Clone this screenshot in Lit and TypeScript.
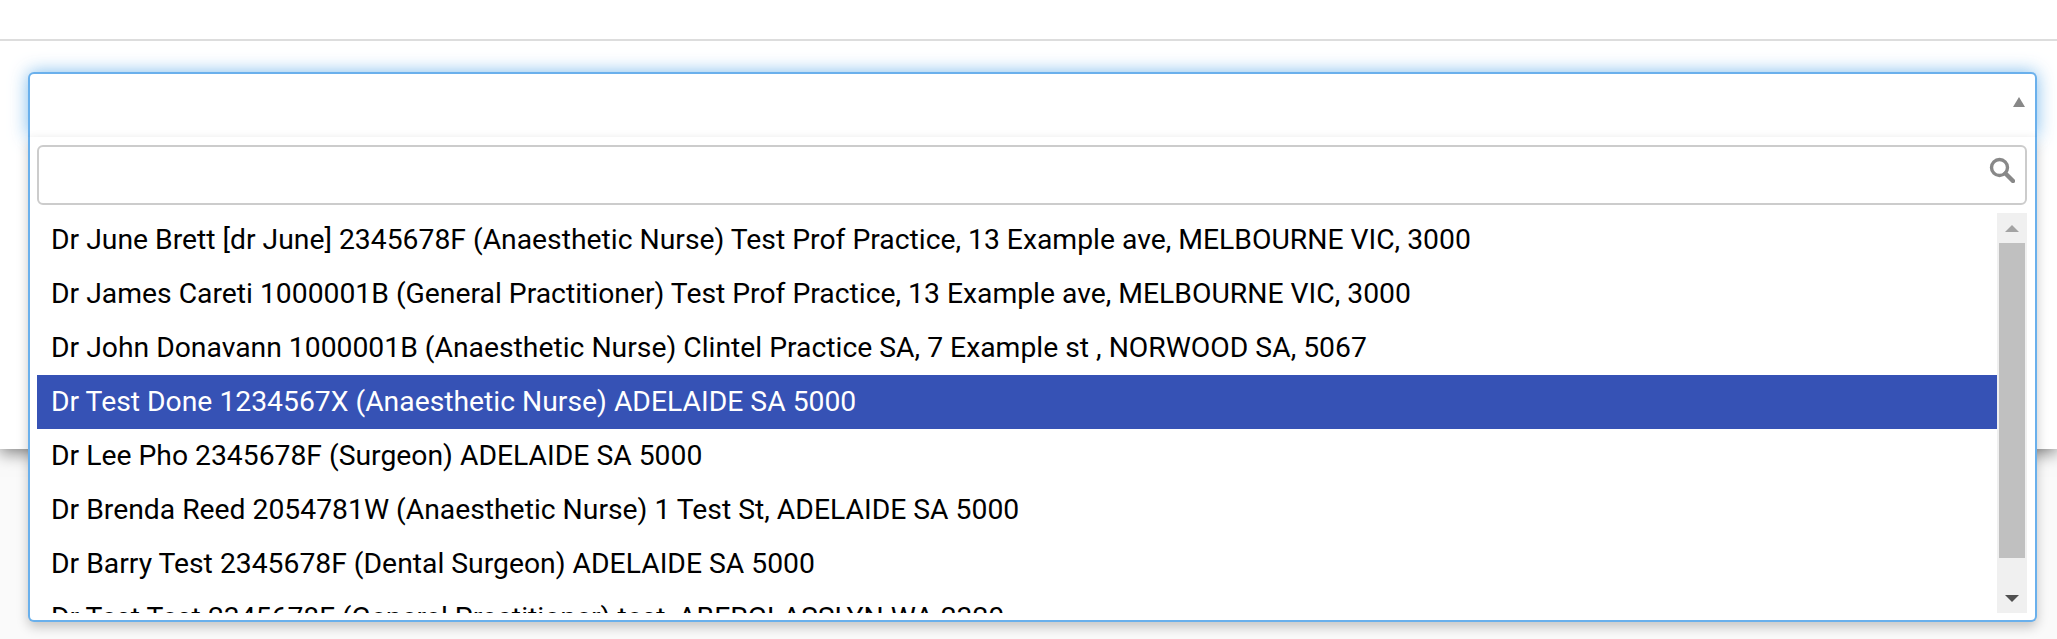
import { LitElement, css, html } from 'lit';
import { customElement } from 'lit/decorators.js';

const DOCTORS = [
  'Dr June Brett [dr June] 2345678F (Anaesthetic Nurse) Test Prof Practice, 13 Example ave, MELBOURNE VIC, 3000',
  'Dr James Careti 1000001B (General Practitioner) Test Prof Practice, 13 Example ave, MELBOURNE VIC, 3000',
  'Dr John Donavann 1000001B (Anaesthetic Nurse) Clintel Practice SA, 7 Example st , NORWOOD SA, 5067',
  'Dr Test Done 1234567X (Anaesthetic Nurse) ADELAIDE SA 5000',
  'Dr Lee Pho 2345678F (Surgeon) ADELAIDE SA 5000',
  'Dr Brenda Reed 2054781W (Anaesthetic Nurse) 1 Test St, ADELAIDE SA 5000',
  'Dr Barry Test 2345678F (Dental Surgeon) ADELAIDE SA 5000',
  'Dr Test Test 2345678F (General Practitioner) test, ABERGLASSLYN WA 2320',
];
const SELECTED = 3;

@customElement('app-root')
export class AppRoot extends LitElement {
  static styles = css`
    :host {
      display: block;
      position: relative;
      height: 639px;
      overflow: hidden;
      background: #fafafa;
      font-family: Roboto, sans-serif;
      color: #000;
    }
    .panel {
      height: 449px;
      box-sizing: border-box;
      padding-top: 39px;
      background: #fff;
      box-shadow: 0 4px 16px rgba(0, 0, 0, 0.5);
    }
    .rule {
      height: 2px;
      background: #ddd;
    }
    .select {
      position: absolute;
      left: 28px;
      right: 20px;
      top: 72px;
    }
    .single {
      height: 65px;
      box-sizing: border-box;
      display: flex;
      justify-content: flex-end;
      padding: 23px 10px 0 0;
      background: #fff;
      border: 2px solid #6ab0ec;
      border-bottom: 0;
      border-radius: 6px 6px 0 0;
      box-shadow: 0 0 18px rgba(102, 175, 233, 0.85);
    }
    .drop {
      position: relative;
      height: 485px;
      box-sizing: border-box;
      padding: 8px 8px 9px 7px;
      background: #fff;
      border: 2px solid #6ab0ec;
      border-top: 0;
      border-radius: 0 0 6px 6px;
      box-shadow: 0 5px 12px rgba(0, 0, 0, 0.22);
    }
    .search {
      display: flex;
      justify-content: flex-end;
      height: 60px;
      box-sizing: border-box;
      padding: 10px 10px 0 0;
      border: 2px solid #ccc;
      border-radius: 6px;
    }
    .results {
      display: flex;
      height: 400px;
      margin-top: 8px;
    }
    .list {
      flex: 1;
      min-width: 0;
      overflow: hidden;
    }
    .row {
      height: 54px;
      box-sizing: border-box;
      padding-left: 14px;
      font-size: 28.3px;
      line-height: 53px;
      white-space: nowrap;
    }
    .row.on {
      background: #3652b5;
      color: #fff;
    }
    .bar {
      width: 30px;
      display: flex;
      flex-direction: column;
      align-items: center;
      background: #f0f0f0;
    }
    .btn {
      width: 100%;
      height: 30px;
      display: flex;
      align-items: center;
      justify-content: center;
    }
    .thumb {
      width: 26px;
      height: 315px;
      background: #c0c0c0;
    }
    .track {
      flex: 1;
    }
    svg {
      display: block;
    }
  `;

  render() {
    return html`
      <div class="panel"><div class="rule"></div></div>
      <div class="select">
        <div class="single">
          <svg width="12" height="10" viewBox="0 0 12 10"><path d="M6 0 12 10H0z" fill="#888" /></svg>
        </div>
        <div class="drop">
          <div class="search">
            <svg width="26" height="26" viewBox="0 0 26 26" fill="none" stroke="#888">
              <circle cx="10.5" cy="10.5" r="8" stroke-width="3.4" />
              <path d="M16.5 16.5 24 24" stroke-width="4.4" stroke-linecap="round" />
            </svg>
          </div>
          <div class="results">
            <div class="list">
              ${DOCTORS.map(
                (d, i) => html`<div class="row ${i === SELECTED ? 'on' : ''}">${d}</div>`,
              )}
            </div>
            <div class="bar">
              <div class="btn">
                <svg width="14" height="7" viewBox="0 0 14 7"><path d="M7 0 14 7H0z" fill="#a3a3a3" /></svg>
              </div>
              <div class="thumb"></div>
              <div class="track"></div>
              <div class="btn">
                <svg width="14" height="7" viewBox="0 0 14 7"><path d="M0 0H14L7 7z" fill="#505050" /></svg>
              </div>
            </div>
          </div>
        </div>
      </div>
    `;
  }
}
